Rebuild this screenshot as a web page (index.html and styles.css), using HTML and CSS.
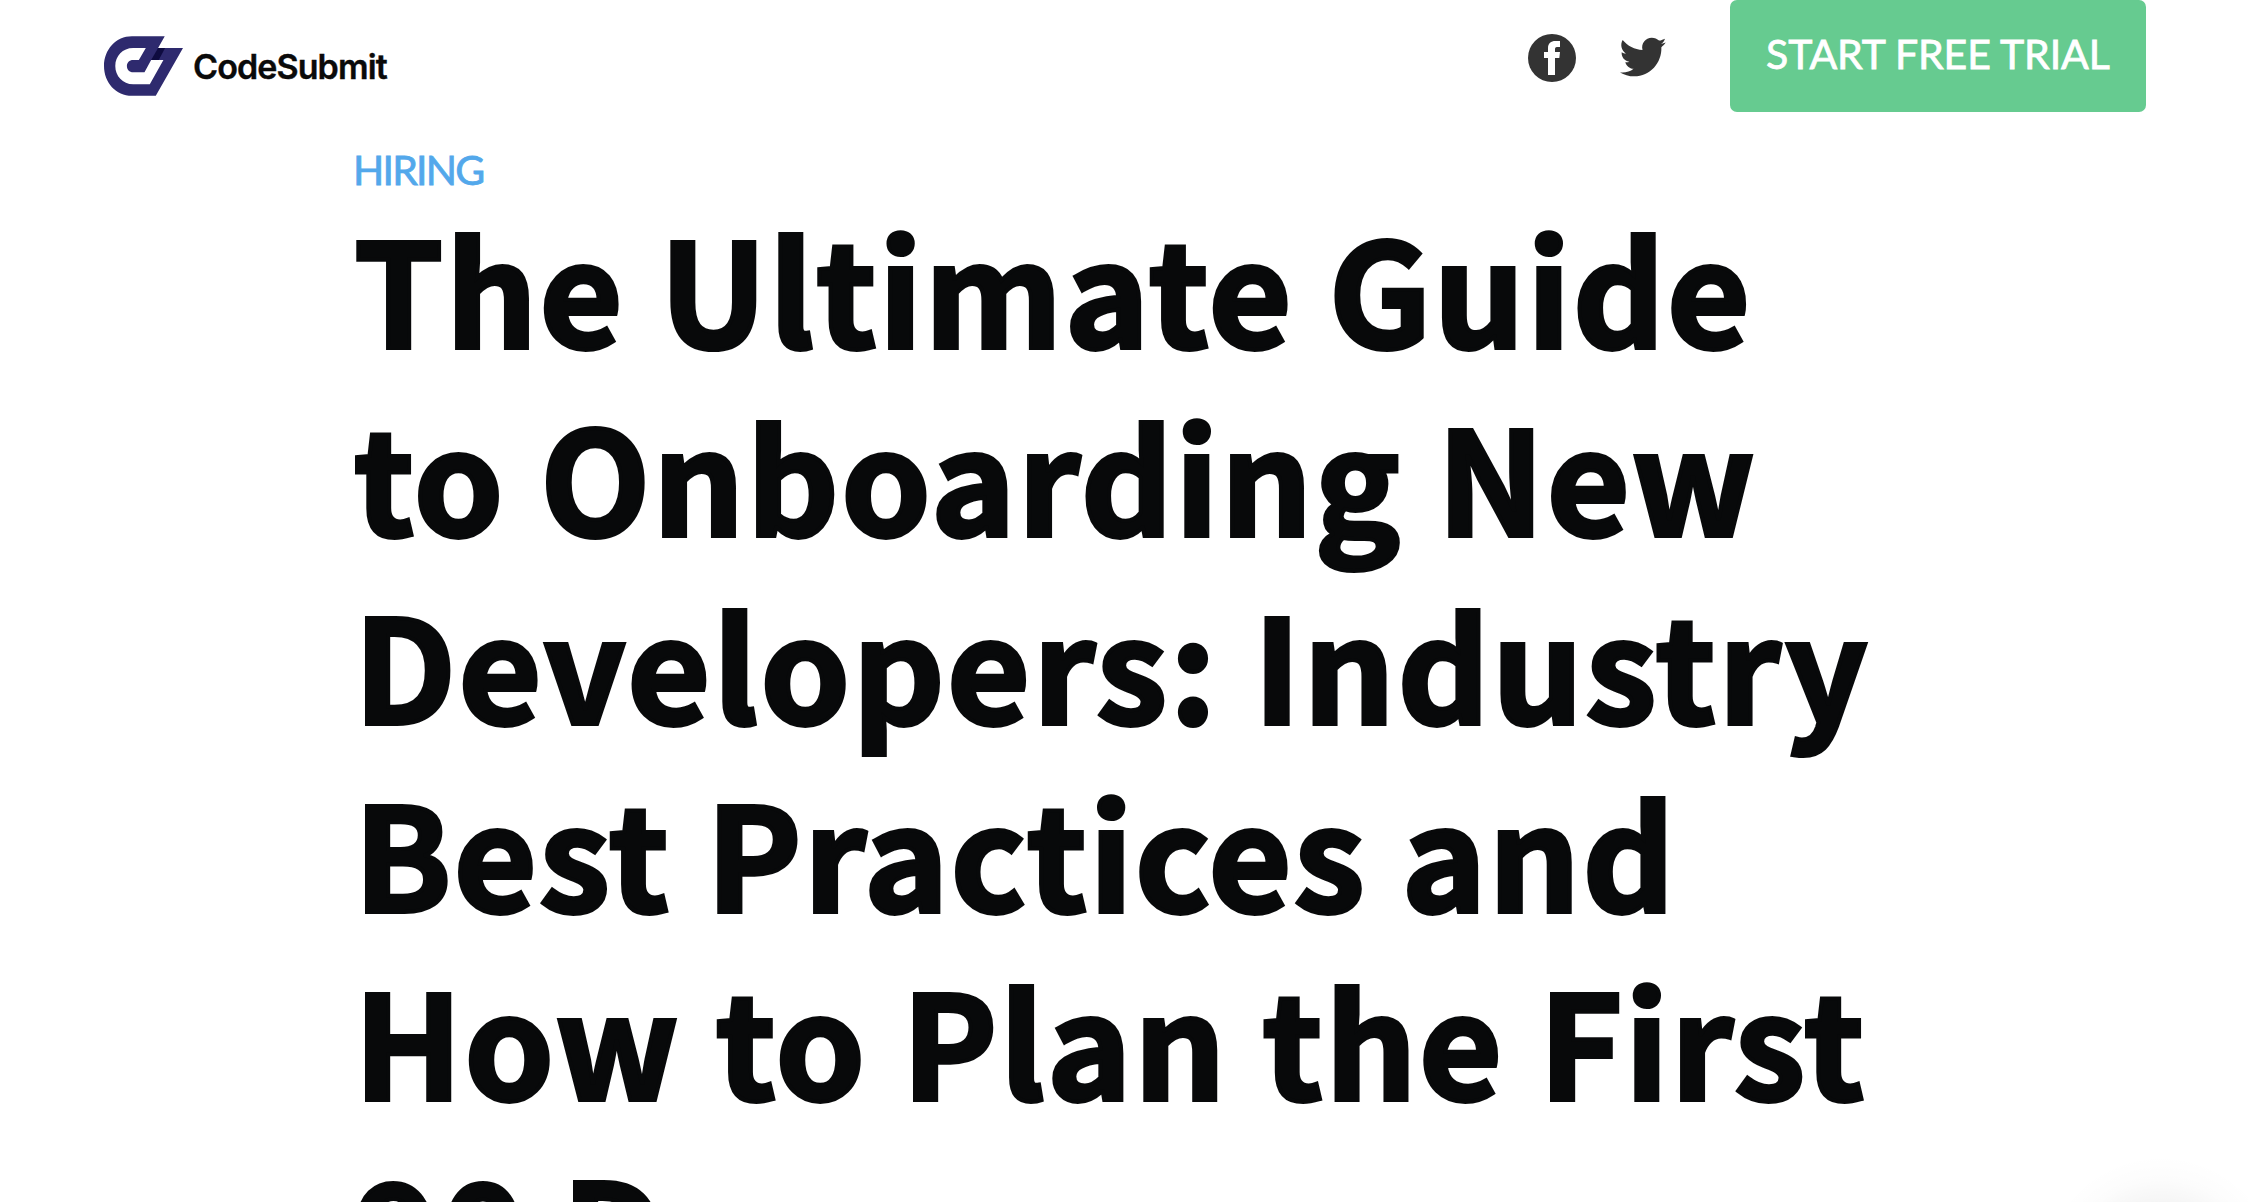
FILE: index.html
```html
<!DOCTYPE html>
<html lang="en">
<head>
<meta charset="utf-8">
<title>The Ultimate Guide to Onboarding New Developers</title>
<link rel="stylesheet" href="styles.css">
</head>
<body>
<header class="header">
  <a class="brand">
    <svg class="brand-mark" viewBox="42 48 238 180" aria-hidden="true">
      <path fill="#2e2a6e" fill-rule="evenodd" d="M126 48H225L205 84H280L198 228H126C78 228 42 188 42 138S78 48 126 48ZM168 84H130C98 84 76 108 76 138S98 193 130 193H180L221 120H184L164 157H130C118 157 111 148 111 138S118 120 130 120H147Z"/>
      <path fill="#0e0b40" d="M205 84H226L207 120H184Z"/>
    </svg>
    <span class="brand-name">CodeSubmit</span>
  </a>
  <nav class="actions">
    <svg class="facebook" viewBox="84 72 144 144" aria-label="Facebook">
      <circle cx="156" cy="144" r="72" fill="#333"/>
      <path fill="#fff" d="M144 195V144H132V126H144V115C144 100 153 93 166 93H180V111H171C166 111 165 114 165 118V126H180L178 144H165V195Z"/>
    </svg>
    <svg class="twitter" viewBox="360 81 139 119" aria-label="Twitter">
      <path fill="#333" d="M360 187C375 189 390 185 401 176C388 175 379 167 376 156C380 157 384 157 388 155C373 152 364 140 365 126C369 128 373 130 378 130C364 120 360 103 368 89C383 107 404 118 428 119C423 99 437 82 456 82C465 82 472 86 478 91C485 90 491 87 496 85C494 92 490 97 484 101C489 100 494 99 498 97C495 102 490 107 485 111C487 158 451 199 403 199C387 199 372 194 360 187Z"/>
    </svg>
    <a class="cta"><span class="cta-label">START FREE TRIAL</span></a>
  </nav>
</header>
<main class="article">
  <a class="category">HIRING</a>
  <h1 class="title">The Ultimate Guide<br>to Onboarding New<br><span class="title-wide">Developers: Industry</span><br>Best Practices and<br>How to Plan the First<br>90 Days</h1>
</main>
<div class="chat-shadow"></div>
</body>
</html>
```
FILE: styles.css
```css
html {
  overflow: hidden;
}
body {
  margin: 0;
  height: 1202px;
  overflow: hidden;
  background: #fff;
  font-family: Lato, sans-serif;
}
.header {
  display: flex;
  justify-content: space-between;
  align-items: flex-start;
  height: 112px;
  padding: 0 102px 0 104px;
}
.brand {
  display: flex;
  align-items: center;
  gap: 10px;
  padding-top: 36px;
  height: 60px;
}
.brand-mark {
  width: 79px;
  height: 60px;
}
.brand-name {
  font: 600 34px/60px Inter, sans-serif;
  letter-spacing: -0.9px;
  padding-top: 2px;
  color: #0a0a0a;
  -webkit-text-stroke: 0.4px #0a0a0a;
}
.actions {
  display: flex;
  align-items: flex-start;
}
.facebook {
  width: 48px;
  height: 48px;
  margin: 34px 44px 0 0;
}
.twitter {
  width: 46px;
  height: 40px;
  margin: 37px 64px 0 0;
}
.cta {
  box-sizing: border-box;
  width: 416px;
  height: 112px;
  padding: 29px 0 0 36px;
  border-radius: 7px;
  background: #66cb90;
  color: #fff;
  white-space: nowrap;
}
.cta-label {
  display: block;
  font-size: 41px;
  line-height: 50px;
  letter-spacing: -0.1px;
  -webkit-text-stroke: 0.8px #fff;
}
.article {
  padding: 33px 354px 0;
}
.category {
  display: block;
  height: 50px;
  font-size: 41px;
  line-height: 50px;
  letter-spacing: -1.8px;
  margin-left: -1px;
  color: #53a8eb;
  -webkit-text-stroke: 0.8px #53a8eb;
}
.title {
  margin: -3px 0 0;
  font: 700 143px/188px "Noto Sans CJK SC", sans-serif;
  letter-spacing: 2.3px;
  color: #08090a;
  -webkit-text-stroke: 4px #08090a;
  white-space: nowrap;
}
.title-wide {
  letter-spacing: 2.5px;
}
.chat-shadow {
  position: absolute;
  left: 2041px;
  top: 1156px;
  width: 207px;
  height: 46px;
  background: radial-gradient(circle 121px at 120px 120px, rgba(0,0,0,.045) 58%, rgba(0,0,0,.01) 80%, transparent 100%);
}
```
